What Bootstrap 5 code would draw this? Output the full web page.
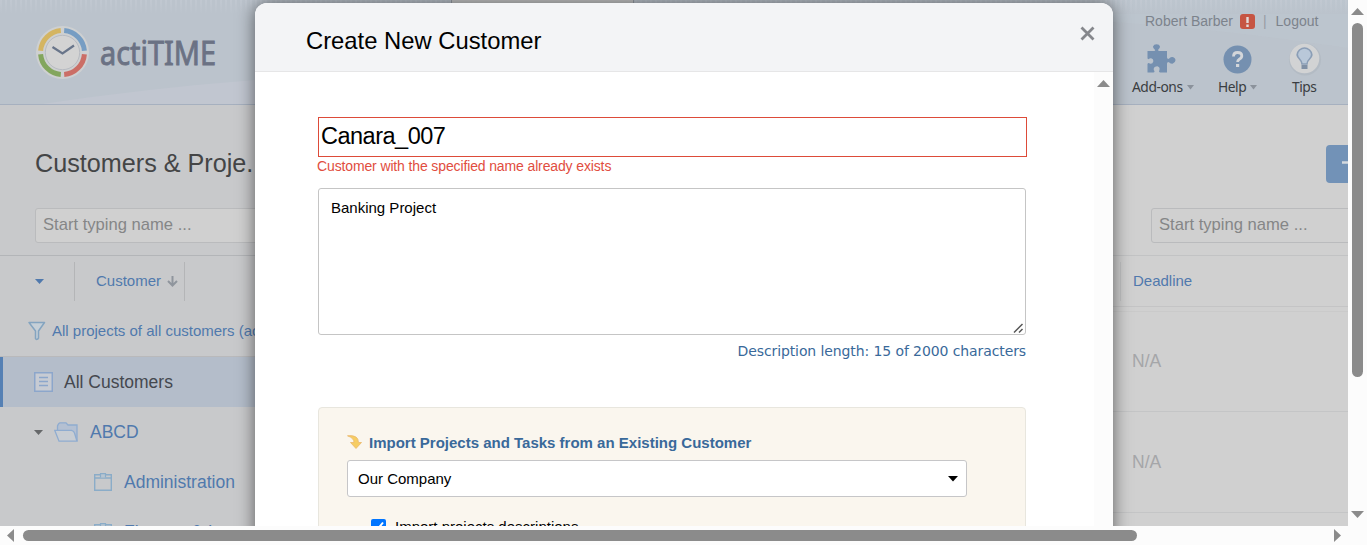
<!DOCTYPE html>
<html lang="en">
<head>
<meta charset="utf-8">
<title>actiTIME - Customers &amp; Projects</title>
<link href="https://cdn.jsdelivr.net/npm/bootstrap@5.3.0/dist/css/bootstrap.min.css" rel="stylesheet">
<style>
body{width:1367px;height:545px;overflow:hidden;font-family:"Liberation Sans",Arial,sans-serif;font-size:15px;line-height:20px;color:#000;background:#fcfcfc}
svg{display:block;flex:none}
.view{width:1348px;height:526px;background:#d0d0d0}
.vbar{width:19px;height:526px;background:#fcfcfc}
.hbar{width:1348px;height:19px;background:#fcfcfc}
.thumb{background:#8b8b8b;border-radius:6px}
.top-bar{height:105px;background:#bbc3cc;border-bottom:1px solid #a6b0bf}
.brand-area{padding:25px 0 0 35px}
.account{font-size:14px;color:#7c838c;height:20px}
.tool{font-family:"Noto Sans",sans-serif;font-size:13.8px;letter-spacing:-.45px;line-height:18px;color:#3a3d41}
.tree-pane{width:684px;height:421px;background:#c8c9cb;flex:none}
.page-title{font-size:25.2px;line-height:32px;color:#444546;margin:0;padding:42px 0 0 35px}
.search{height:35px;border:1px solid #babbbd;border-radius:3px;background:#d0d0d0;color:#858687;font-size:16.6px;line-height:31px;padding-left:7px}
.head-row{border-top:1px solid #b3b5b8;height:51px;color:#5079ad}
.cell-line{width:1px;height:39px;background:#b4b5b7}
.filter-row{height:51px;color:#5079ad;border-bottom:1px solid #b9b9bb}
.node{height:50px;font-size:17.5px;color:#5079ad}
.node.chosen{background:#b4bdca;color:#45484f;border-left:3px solid #5580b4}
.add-btn{width:60px;height:38px;border-radius:4px;background:#7292b7;color:#dce0e4}
.na{font-size:17.5px;color:#a5a6a9;height:101px;border-bottom:1px solid #c4c5c6;padding-left:19px}
.dialog-box{position:absolute;left:255px;top:3px;width:858px;height:560px;background:#fff;border-radius:12px 12px 0 0;box-shadow:0 0 18px rgba(0,0,0,.55);overflow:hidden}
.dialog-head{height:69px;background:#f3f4f6;border-bottom:1px solid #e6e6e7;padding:7px 17px 0 51px}
.dialog-head h2{font-size:23.8px;line-height:32px;margin:0}
.dialog-main{width:839px;padding:45px 0 0 63px}
.inner-track{width:19px;background:#fcfcfc;padding:8px 0 0 3px}
.name-box{width:709px;height:40px;border:1px solid #dd4b39;font-size:23.5px;letter-spacing:-.5px;line-height:36px;padding-left:2px}
.err{color:#e14d40;font-size:14px;letter-spacing:-.13px;line-height:19px;height:18px;margin-left:-1px}
.desc{width:708px;height:147px;border:1px solid #c5c5c5;border-radius:3px;padding:9px 12px;margin-top:13px;position:relative}
.count{width:708px;font-family:"DejaVu Sans",Verdana,sans-serif;font-size:14px;letter-spacing:-.1px;color:#39699a;line-height:20px;margin-top:6px}
.import{width:708px;height:200px;border:1px solid #e8e6de;border-radius:4px;background:#faf6ee;margin-top:46px;padding:25px 28px}
.import h3{font-size:15px;line-height:20px;font-weight:bold;color:#39699a;margin:0}
.picker{width:620px;height:37px;border:1px solid #c6c6c8;border-radius:3px;background:#fff;margin-top:7px;padding:0 8px 0 10px}
</style>
</head>
<body>
<div class="d-flex">
<main class="view position-relative overflow-hidden">
  <header class="top-bar position-relative d-flex justify-content-between">
    <svg class="position-absolute top-0 start-0" width="1348" height="104">
      <defs><pattern id="pin" width="5" height="14" patternUnits="userSpaceOnUse"><rect width="2" height="13" fill="#c6ccd4" opacity=".55"/></pattern>
      <linearGradient id="fade" x2="0" y2="1"><stop stop-color="#bbc3cc" stop-opacity="0"/><stop offset="1" stop-color="#bbc3cc"/></linearGradient></defs>
      <path d="M42 104Q150 88 255 80L700 40V104Z" fill="#c1c6d0"/>
      <path d="M1113 0H1348V48Q1230 30 1113 22Z" fill="#c1c8d0" opacity=".35"/>
      <rect width="1348" height="13" fill="url(#pin)"/><rect width="1348" height="14" fill="url(#fade)"/>
      <path d="M451.500 0V4M633.500 0V4" stroke="#999fa8"/><path d="M452 0H633V4H452Z" fill="#c8c9ca"/>
    </svg>
    <div class="brand-area position-relative">
      <svg width="190" height="70">
        <circle cx="27.500" cy="27.500" r="26.500" fill="#ced0d1"/>
        <g fill="none" stroke-width="5">
          <path d="M29.200 5.600A22 22 0 0 1 49.400 25.800" stroke="#769dc3"/>
          <path d="M49.400 29.200A22 22 0 0 1 29.200 49.400" stroke="#cb6e66"/>
          <path d="M25.800 49.400A22 22 0 0 1 5.600 29.200" stroke="#83a65d"/>
          <path d="M5.600 25.800A22 22 0 0 1 25.800 5.600" stroke="#d4b562"/>
        </g>
        <circle cx="27.500" cy="27.500" r="17.200" fill="#d3d3d3" stroke="#b7bbc2"/>
        <path d="M17.500 22L27.500 28.500L39 20.500" fill="none" stroke="#69758a" stroke-width="2.200"/>
        <text x="65" y="39.500" textLength="116" lengthAdjust="spacingAndGlyphs" font-family="Noto Sans" font-size="33" stroke="#6b7284" stroke-width=".9" fill="#6b7284">actiTIME</text>
      </svg>
    </div>
    <div class="position-relative" style="width:235px">
      <div class="account d-flex align-items-center" style="margin:11px 0 0 32px">
        <span>Robert Barber</span>
        <svg width="15" height="16" style="margin:0 8px 0 7px"><rect y="1" width="15" height="15" rx="3" fill="#c65543"/><path d="M7.500 4V10M7.500 11.500V14" stroke="#e3dcda" stroke-width="2.400"/></svg>
        <span style="color:#979ca3">|</span><span style="margin-left:9px">Logout</span>
      </div>
      <div class="d-flex tool" style="margin-left:19px">
        <div style="width:86px">
          <svg width="62" height="47"><path fill="#7590b0" d="M15.500 17H22.500Q24 16.500 22.500 15.300Q21 14.300 21 12.500Q21.800 10.300 24.500 10.300Q27.500 10.300 28 12.500Q28 14.300 26.500 15.300Q25.200 16.500 27 17H35V23.500Q35.500 26 37.500 24.300Q38.800 22.800 40.500 23Q43.500 23.800 43.500 26.300Q43.300 29 40.500 29.800Q38.500 29.800 37.300 28.500Q35.500 27 35 29.500V38.500H28Q26.300 38 27.300 36.500Q28.500 33.300 25.500 32.300Q22 32.300 21.700 35Q21.600 36.200 22.400 37Q23 38.200 21.500 38.500H15.500V30Q16.200 28.300 17.800 29.500Q20.500 30.300 21.300 27.500Q21.500 24.700 19 24.200Q17.700 24.100 16.500 25.200L15.500 24.500Z" transform="translate(0 3)"/></svg>
          <div class="d-flex align-items-center">Add-ons<svg class="ms-1" width="7" height="5"><path d="M0 0H7L3.500 4.500Z" fill="#8b929b"/></svg></div>
        </div>
        <div style="width:74px">
          <svg width="40" height="47"><circle cx="19.500" cy="28.500" r="14" fill="#7590b0"/><path d="M15.500 25.500Q15.500 21.500 19.600 21.500Q23.800 21.500 23.800 25Q23.800 27 21.300 28.300Q19.600 29.300 19.600 31" fill="none" stroke="#d3d6da" stroke-width="2.800"/><rect x="18" y="33" width="3.200" height="3" fill="#d3d6da"/></svg>
          <div class="d-flex align-items-center">Help<svg class="ms-1" width="7" height="5"><path d="M0 0H7L3.500 4.500Z" fill="#8b929b"/></svg></div>
        </div>
        <div>
          <svg width="30" height="47" overflow="visible"><circle cx="13" cy="28.500" r="16" fill="#aeb5be" opacity=".6"/><circle cx="12.500" cy="27.500" r="14.800" fill="#d2d3d4"/><path d="M10 33Q9.500 30 7.500 28Q3 23.500 7.500 19Q12.500 15 17.500 19Q22 23.500 17.500 28Q15.300 30 15 33Z" fill="#b9c8d9" stroke="#8b9eb6" stroke-width="1.600"/><path d="M9.500 34H15.500V38H9.500Z" fill="#8090a5"/></svg>
          <div>Tips</div>
        </div>
      </div>
    </div>
  </header>
  <div class="d-flex">
    <section class="tree-pane">
      <h1 class="page-title">Customers &amp; Proje...</h1>
      <div class="search" style="width:260px;margin:29px 0 12px 35px">Start typing name ...</div>
      <div class="head-row d-flex align-items-center">
        <svg width="39" height="5" style="margin-left:35px"><path d="M0 0H9L4.500 5Z" fill="#5079ad"/></svg>
        <div class="cell-line"></div><span style="margin-left:21px">Customer</span>
        <svg width="11" height="11" style="margin:0 6px"><path d="M5.500 0V9M1 5L5.500 9.500L10 5" fill="none" stroke="#8f959d" stroke-width="2"/></svg>
        <div class="cell-line"></div>
      </div>
      <div class="filter-row d-flex align-items-center">
        <svg width="18" height="21" style="margin:0 6px 0 28px"><path d="M1 1.500H16.500L10.500 10V17Q9 19.500 7.500 17.500V10Z" fill="#c6cfd7" stroke="#84a4c0" stroke-width="1.500" stroke-linejoin="round"/></svg>
        <span>All projects of all customers (active)</span>
      </div>
      <div class="node chosen d-flex align-items-center">
        <svg width="19" height="20" style="margin:0 11px 0 31px"><rect x=".75" y=".75" width="17.500" height="18.500" fill="#c7cbd3" stroke="#8ca6cb" stroke-width="1.500"/><path d="M5 5.500H14M5 9.500H14M5 13.500H14" stroke="#8ca6cb" stroke-width="1.300"/></svg>All Customers
      </div>
      <div class="node d-flex align-items-center">
        <svg width="9" height="5" style="margin:0 11px 0 34px"><path d="M0 0H9L4.500 5Z" fill="#66686a"/></svg>
        <svg width="24" height="20" style="margin-right:12px"><path d="M3.500 8V4Q4.500 .8 6 .8H12L14 3H23V19" fill="#b4c0d2" stroke="#8facd0" stroke-width="1.300"/><path d="M.7 8.300H17.500Q20 9 20.500 11L23 19.200H5Z" fill="#c8cdd3" stroke="#8facd0" stroke-width="1.300"/></svg>ABCD
      </div>
      <div class="node d-flex align-items-center">
        <svg width="18" height="18" style="margin:0 12px 0 94px"><path d="M.7 1.700H17.300V17.300H.7ZM1 5H17" fill="none" stroke="#8aacc8" stroke-width="1.400"/><path d="M6.500 4.500V.7H11.500V4.500" fill="#b7c5d1" stroke="#8aacc8" stroke-width="1.200"/></svg>Administration
      </div>
      <div class="node d-flex align-items-center">
        <svg width="18" height="18" style="margin:0 12px 0 94px"><path d="M.7 1.700H17.300V17.300H.7ZM1 5H17" fill="none" stroke="#8aacc8" stroke-width="1.400"/><path d="M6.500 4.500V.7H11.500V4.500" fill="#b7c5d1" stroke="#8aacc8" stroke-width="1.200"/></svg>Finance &amp; I...
      </div>
    </section>
    <section class="flex-grow-1 overflow-hidden">
      <div class="d-flex" style="padding:40px 0 25px 642px"><div class="add-btn d-flex align-items-center flex-shrink-0"><svg width="32" height="14" style="margin-left:16px"><path d="M0 5.500H14" stroke="#d5d9de" stroke-width="2.500"/></svg></div></div>
      <div class="search" style="margin:0 -5px 12px 467px">Start typing name ...</div>
      <div class="head-row d-flex align-items-center" style="border-color:#c2c3c4;padding-left:436px"><div class="cell-line" style="background:#c3c4c5"></div><span style="margin-left:12px">Deadline</span></div>
      <div style="height:5px;border-top:1px solid #c4c4c5"></div>
      <div style="padding-left:429px;border-top:1px solid #cacaca">
        <div class="na d-flex align-items-center" style="height:100px;padding-bottom:2px">N/A</div>
        <div class="na d-flex align-items-center">N/A</div>
      </div>
    </section>
  </div>

  <div class="dialog-box">
    <div class="dialog-head d-flex justify-content-between">
      <h2 style="padding-top:15px;font-weight:400">Create New Customer</h2>
      <svg width="16" height="16" style="margin-top:15px"><path d="M1.500 2.500L13.500 14.500M13.500 2.500L1.500 14.500" stroke="#85878c" stroke-width="2.800"/></svg>
    </div>
    <div class="d-flex h-100">
      <div class="dialog-main">
        <div class="name-box">Canara_007</div>
        <div class="err">Customer with the specified name already exists</div>
        <div class="desc">Banking Project
          <svg class="position-absolute bottom-0 end-0" width="12" height="12"><path d="M1 10.500L9.500 2M6 10.500L9.500 7" stroke="#555" stroke-width="1.500"/></svg>
        </div>
        <div class="count text-end text-nowrap">Description length: 15 of 2000 characters</div>
        <div class="import">
          <div class="d-flex align-items-center">
            <svg width="15" height="16" style="margin-right:7px"><path d="M.5 .8Q11.500 -.5 11.500 7.500H14.500L9 13.500L3.500 7.500H7Q7 3 .5 .8Z" fill="#f6cd63" stroke="#ebb869" stroke-width=".8"/></svg>
            <h3 class="text-nowrap">Import Projects and Tasks from an Existing Customer</h3>
          </div>
          <div class="picker d-flex align-items-center justify-content-between">Our Company<svg width="10" height="6"><path d="M0 0H10L5 5.500Z" fill="#000"/></svg></div>
          <div class="d-flex align-items-center" style="margin:20px 0 0 24px">
            <svg width="15" height="15" style="margin-right:9px;margin-top:-2px"><rect width="15" height="15" rx="2" fill="#0075ff"/><path d="M3 8L6 11L12 3.500" stroke="#fff" stroke-width="2" fill="none"/></svg>Import projects descriptions
          </div>
        </div>
      </div>
      <div class="inner-track"><svg width="13" height="7"><path d="M6.500 0L13 7H0Z" fill="#8b8b8b"/></svg></div>
    </div>
  </div>
</main>
<div class="vbar d-flex flex-column align-items-center">
  <svg width="13" height="7" style="margin-top:8px"><path d="M6.500 0L13 7H0Z" fill="#8b8b8b"/></svg>
  <div class="thumb" style="width:11px;height:354px;margin-top:8px"></div>
  <svg width="13" height="7" style="margin:auto 0 8px"><path d="M0 0H13L6.500 7Z" fill="#8b8b8b"/></svg>
</div>
</div>
<div class="hbar d-flex align-items-center">
  <svg width="7" height="13" style="margin:0 9px 0 7px"><path d="M7 0V13L0 6.500Z" fill="#8b8b8b"/></svg>
  <div class="thumb" style="width:1114px;height:11px"></div>
  <svg width="7" height="13" style="margin:0 7px 0 auto"><path d="M0 0V13L7 6.500Z" fill="#8b8b8b"/></svg>
</div>
<script src="https://cdn.jsdelivr.net/npm/bootstrap@5.3.0/dist/js/bootstrap.bundle.min.js"></script>
</body>
</html>
